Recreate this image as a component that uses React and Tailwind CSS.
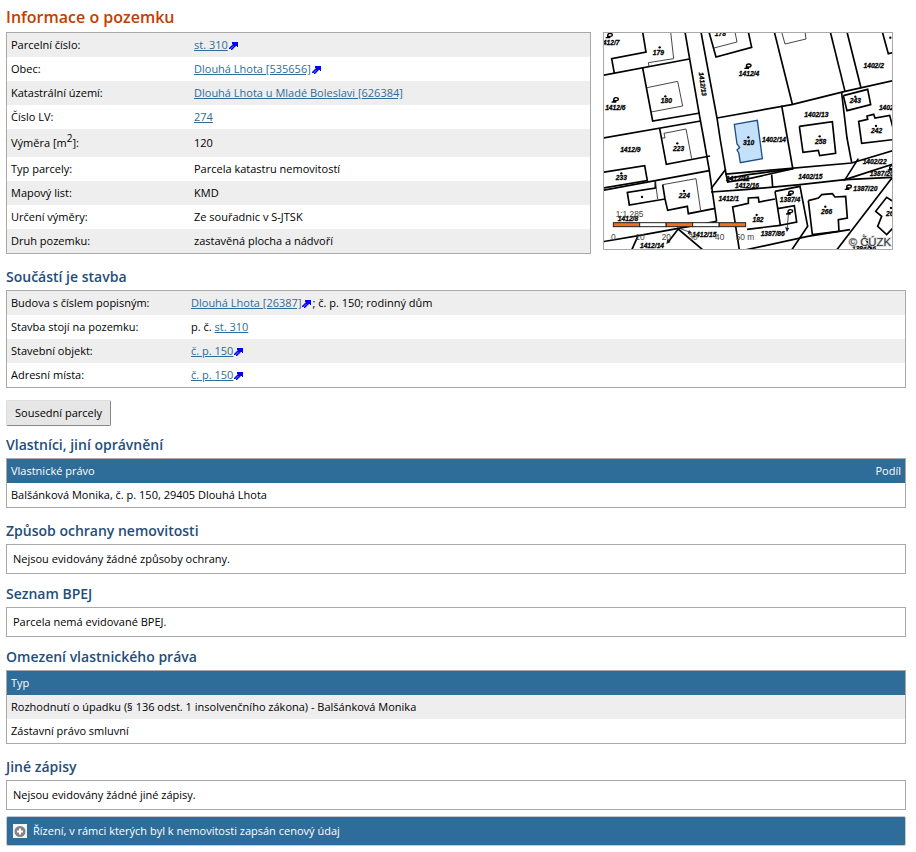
import React, { useState } from "react";

// Arrow shown after links that lead to another application
const ExternalIcon = () => (
  <svg viewBox="0 0 10 9" className="inline-block ml-px w-[10px] h-[9px] align-[-2px]">
    <path d="M3 0H9V5H8V4H7L3 8H2V7H0V6L4 2H3Z" fill="#0000ff" />
    <path d="M1.5 7L4.5 4" stroke="#fff" strokeWidth="0.5" />
  </svg>
);

const TextLink = ({ children, external }) => (
  <a href="#" className="text-[#2e6c99] underline">
    {children}
    {external && <ExternalIcon />}
  </a>
);

const InfoTable = ({ rows, labelClass }) => (
  <table className="w-full border border-[#a9a9a9] border-separate border-spacing-0">
    <tbody>
      {rows.map(([label, value, heightClass], i) => (
        <tr key={i} className="odd:bg-[#eeeeee]">
          <th scope="row" className={`${labelClass} ${heightClass || "h-6"} pl-1 text-left font-normal`}>
            {label}
          </th>
          <td>{value}</td>
        </tr>
      ))}
    </tbody>
  </table>
);

const Heading = ({ children, className }) => (
  <h2 className={`${className} mb-[3px] text-[14px] leading-5 font-semibold text-[#1f4e79]`}>{children}</h2>
);

const Box = ({ children }) => (
  <p className="border border-[#a9a9a9] px-1.5 py-1 leading-5">{children}</p>
);

const thickLines = [
  "119,0 129,60 26,80 34,124",
  "0,130 259,81",
  "246,0 289,248 304,330 319,416 341,568",
  "294,0 342,258 351,318 367,413 324,470",
  "119,108 149,267 291,243",
  "0,318 293,267",
  "170,290 190,397 321,372",
  "318,0 339,75 446,46 436,0",
  "342,258 566,218 726,178 870,146",
  "514,0 568,216",
  "682,0 726,178",
  "732,0 774,168",
  "838,0 856,65 870,62",
  "721,191 794,172 803,218 732,236 721,191",
  "870,323 776,334 767,268 794,262 792,252 812,247 816,258 860,250 870,288",
  "716,183 732,318 746,392",
  "589,283 688,269 698,364 650,371 646,355 600,361 589,283",
  "536,221 569,408",
  "367,413 369,426 426,421 746,393 870,356",
  "369,426 374,450 438,440 571,410",
  "374,440 436,428 571,410",
  "324,480 426,473 591,458 726,443 870,436",
  "506,428 509,465",
  "766,380 726,443 870,396",
  "516,478 591,463 614,583 566,654",
  "516,478 532,580 581,570 574,521 524,530",
  "409,654 389,525 436,514 436,498 466,496 468,510 516,501",
  "432,592 532,580",
  "426,654 614,613 741,593",
  "616,506 646,498 656,488 688,485 696,495 728,493 733,558 706,563 708,598 628,608 616,506",
  "870,434 701,654",
  "870,508 851,496 818,538 836,553 824,583 851,608 870,588",
  "781,608 806,654",
  "0,421 125,401 133,446 0,468",
  "0,475 319,416",
  "157,448 157,468 73,481 79,519 186,501",
  "179,458 186,501 194,535 253,523 256,545 333,530",
  "0,629 111,610 341,568",
  "104,614 86,654",
  "222,588 300,654",
  "228,588 194,632",
];

const thinLines = [
  "203,0 212,80 136,92 138,104",
  "132,167 224,148 239,222 144,240",
  "176,318 186,318 183,304 249,291 266,380",
  "333,48 402,30 396,0",
  "536,0 546,36 609,21 606,0",
  "157,448 164,501",
  "179,458 279,440 293,536",
  "556,548 552,596",
  "232,590 264,602",
];

const mapLabels = [
  ["1412/7", 19, 38],
  ["179", 166, 69],
  ["178", 352, 12],
  ["1412/6", 37, 233],
  ["180", 190, 213],
  ["1412/4", 438, 132],
  ["1402/2", 812, 109],
  ["243", 757, 214],
  ["1402/13", 640, 256],
  ["242", 821, 304],
  ["1402", 850, 235],
  ["310", 437, 338],
  ["1402/14", 513, 330],
  ["258", 653, 335],
  ["1412/9", 82, 361],
  ["223", 227, 356],
  ["233", 55, 444],
  ["224", 244, 497],
  ["1412/11", 404, 447],
  ["1412/16", 432, 467],
  ["1412/1", 377, 508],
  ["1402/15", 622, 440],
  ["1402/22", 815, 397],
  ["1387/20", 836, 433],
  ["1387/20", 787, 478],
  ["1387/4", 561, 511],
  ["266", 671, 546],
  ["182", 465, 569],
  ["1387/86", 509, 613],
  ["1412/8", 75, 567],
  ["1412/15", 304, 616],
  ["1412/14", 147, 649],
  ["26", 860, 553],
  ["1384/16", 783, 656],
];

const dots = [
  [170, 46], [187, 193], [757, 194], [819, 282], [650, 313], [436, 316], [223, 334],
  [55, 424], [243, 477], [117, 495], [667, 524], [461, 549], [862, 17], [864, 528],
];

// Land-use marks
const marks = [
  [18, 11], [36, 204], [434, 103], [561, 484], [559, 540], [735, 466], [864, 408],
];

const scaleTicks = [["0", 31], ["10", 111], ["20", 190], ["30", 270], ["40", 350]];

const ParcelMap = () => (
  <div className="w-[290px] h-[218px] shrink-0 border border-[#a9a9a9]">
    <svg viewBox="3 3 864 648" className="block w-full h-full" role="img" aria-label="Mapa" fontFamily="Liberation Sans, Arial, sans-serif">
      <rect width="870" height="654" fill="#fff" />
      <polygon
        points="394,277 463,265 478,380 412,392 407,362 402,354 410,346 402,336"
        fill="#c4e0fb"
        stroke="#1c4f85"
        strokeWidth="4"
      />
      <g fill="none" stroke="#000" strokeWidth="5">
        {thickLines.map((points) => (
          <polyline key={points} points={points} />
        ))}
      </g>
      <g fill="none" stroke="#222" strokeWidth="2.5">
        {thinLines.map((points) => (
          <polyline key={points} points={points} />
        ))}
      </g>
      <path d="M552 600L546 586L559 588ZM268 604L254 606L258 594ZM190 636L193 622L203 630Z" fill="#222" />
      <g fontSize="20" fontWeight="bold" fontStyle="italic" textAnchor="middle" stroke="#000" strokeWidth="0.8">
        {mapLabels.map(([text, x, y], i) => (
          <text key={i} x={x} y={y}>{text}</text>
        ))}
        <text transform="translate(292 157) rotate(82)" x="0" y="0">1412/13</text>
      </g>
      {dots.map(([x, y]) => (
        <circle key={`${x}-${y}`} cx={x} cy={y} r="3.5" />
      ))}
      <g fill="none" stroke="#000" strokeWidth="4">
        {marks.map(([x, y]) => (
          <path key={`${x}-${y}`} d="M-10 6H4M-4 6V0Q-4 -7 3 -7Q10 -7 10 -2Q10 2 4 2H-4" transform={`translate(${x} ${y})`} />
        ))}
      </g>
      <g stroke="#222" strokeWidth="3">
        {[31, 110, 190, 269, 349].map((x, i) => (
          <rect key={x} x={x} y="572" width="79" height="12" fill={i % 2 ? "#fff" : "#f26f1d"} />
        ))}
      </g>
      <g fontSize="25" fill="#444" textAnchor="middle">
        {scaleTicks.map(([text, x]) => (
          <text key={text} x={x} y="623">{text}</text>
        ))}
        <text x="398" y="623" textAnchor="start">50 m</text>
        <text x="38" y="556" textAnchor="start">1:1 285</text>
      </g>
      <text x="737" y="641" fontSize="34" fill="#333" stroke="#ddd" strokeWidth="5" paintOrder="stroke">© ČÚZK</text>
    </svg>
  </div>
);

const parcelRows = [
  ["Parcelní číslo:", <TextLink external>st. 310</TextLink>],
  ["Obec:", <TextLink external>Dlouhá Lhota [535656]</TextLink>],
  ["Katastrální území:", <TextLink>Dlouhá Lhota u Mladé Boleslavi [626384]</TextLink>],
  ["Číslo LV:", <TextLink>274</TextLink>],
  [<>Výměra [m<sup className="top-0 align-super text-[10px]">2</sup>]:</>, "120", "h-7"],
  ["Typ parcely:", "Parcela katastru nemovitostí"],
  ["Mapový list:", "KMD"],
  ["Určení výměry:", "Ze souřadnic v S-JTSK"],
  ["Druh pozemku:", "zastavěná plocha a nádvoří"],
];

const buildingRows = [
  ["Budova s číslem popisným:", <><TextLink external>Dlouhá Lhota [26387]</TextLink>; č. p. 150; rodinný dům</>],
  ["Stavba stojí na pozemku:", <>p. č. <TextLink>st. 310</TextLink></>],
  ["Stavební objekt:", <TextLink external>č. p. 150</TextLink>],
  ["Adresní místa:", <TextLink external>č. p. 150</TextLink>],
];

const App = () => {
  const [open, setOpen] = useState(false);

  return (
    <main className="pl-1.5 pr-2.5 pt-1.5 pb-1.5 bg-white text-black text-[11px] leading-4 font-['Open_Sans',sans-serif]">
      <h1 className="mb-1 text-[16px] leading-[22px] font-semibold text-[#c04000]">Informace o pozemku</h1>
      <div className="flex items-start gap-3">
        <div className="w-[65%]">
          <InfoTable rows={parcelRows} labelClass="w-[187px]" />
        </div>
        <ParcelMap />
      </div>

      <Heading className="pt-[13px]">Součástí je stavba</Heading>
      <InfoTable rows={buildingRows} labelClass="w-[184px]" />

      <button className="block mt-3 h-[26px] px-2 rounded-xs border border-t-[#dddddd] border-l-[#dddddd] border-r-[#888888] border-b-[#888888] bg-[#e6e6e6] cursor-pointer">
        Sousední parcely
      </button>

      <Heading className="pt-[9px]">Vlastníci, jiní oprávnění</Heading>
      <table className="w-full border border-[#a9a9a9] border-separate border-spacing-0">
        <thead className="bg-[#2e6c99] text-white">
          <tr>
            <th className="h-6 px-1 text-left font-normal">Vlastnické právo</th>
            <th className="h-6 px-1 text-right font-normal">Podíl</th>
          </tr>
        </thead>
        <tbody>
          <tr>
            <td className="h-6 px-1">Balšánková Monika, č. p. 150, 29405 Dlouhá Lhota</td>
            <td></td>
          </tr>
        </tbody>
      </table>

      <Heading className="pt-[13px]">Způsob ochrany nemovitosti</Heading>
      <Box>Nejsou evidovány žádné způsoby ochrany.</Box>

      <Heading className="pt-[10px]">Seznam BPEJ</Heading>
      <Box>Parcela nemá evidované BPEJ.</Box>

      <Heading className="pt-[10px]">Omezení vlastnického práva</Heading>
      <table className="w-full border border-[#a9a9a9] border-separate border-spacing-0">
        <thead className="bg-[#2e6c99] text-white">
          <tr>
            <th className="h-6 px-1 text-left font-normal">Typ</th>
          </tr>
        </thead>
        <tbody>
          <tr className="bg-[#eeeeee]">
            <td className="h-6 px-1">Rozhodnutí o úpadku (§ 136 odst. 1 insolvenčního zákona) - Balšánková Monika</td>
          </tr>
          <tr>
            <td className="h-6 px-1">Zástavní právo smluvní</td>
          </tr>
        </tbody>
      </table>

      <Heading className="pt-[13px]">Jiné zápisy</Heading>
      <Box>Nejsou evidovány žádné jiné zápisy.</Box>

      <button
        onClick={() => setOpen(!open)}
        aria-expanded={open}
        className="flex items-center gap-1.5 w-full h-[30px] mt-1.5 px-1.5 rounded-xs border border-[#c8c8c8] bg-[#2e6c99] text-white text-left cursor-pointer"
      >
        <svg viewBox="0 0 14 14" className="w-[14px] h-[14px]">
          <rect width="14" height="14" fill="#f4f4f4" />
          <circle cx="7" cy="7.5" r="5.5" fill="#858585" />
          <path d="M7 4.5V10.5M4 7.5H10" stroke="#fff" strokeWidth="2" />
        </svg>
        Řízení, v rámci kterých byl k nemovitosti zapsán cenový údaj
      </button>
    </main>
  );
};

export default App;
